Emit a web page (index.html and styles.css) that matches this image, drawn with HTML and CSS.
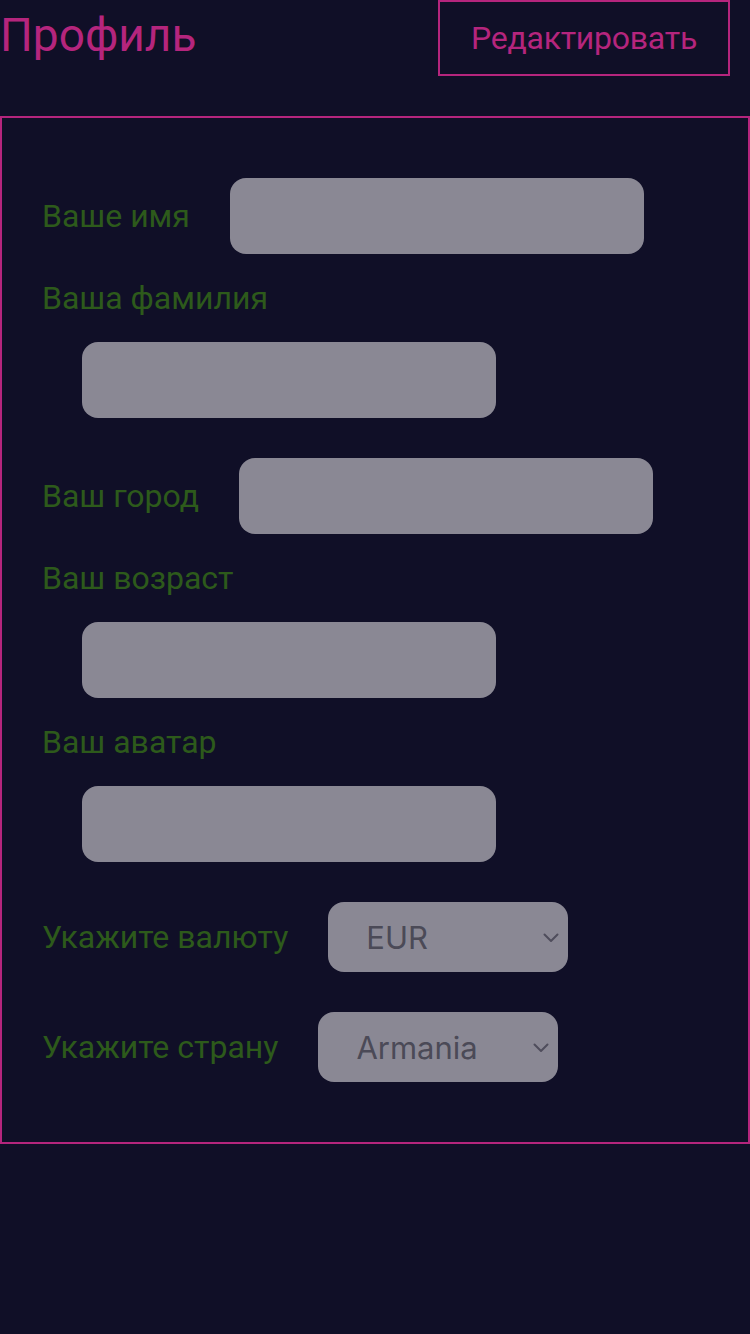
FILE: index.html
```html
<!DOCTYPE html>
<html lang="ru">
<head>
<meta charset="utf-8">
<title>Профиль</title>
<link rel="stylesheet" href="styles.css">
</head>
<body>
<header class="top">
  <h1 class="title">Профиль</h1>
  <button class="edit-btn" type="button">Редактировать</button>
</header>
<form class="profile">
  <div class="field">
    <label class="field-label">Ваше имя</label>
    <input class="field-input" type="text">
  </div>
  <div class="field field--stacked">
    <label class="field-label">Ваша фамилия</label>
    <input class="field-input" type="text">
  </div>
  <div class="field">
    <label class="field-label">Ваш город</label>
    <input class="field-input" type="text">
  </div>
  <div class="field field--stacked">
    <label class="field-label">Ваш возраст</label>
    <input class="field-input" type="text">
  </div>
  <div class="field field--stacked">
    <label class="field-label">Ваш аватар</label>
    <input class="field-input" type="text">
  </div>
  <div class="field">
    <label class="field-label">Укажите валюту</label>
    <span class="select-wrap">
      <select class="field-select">
        <option>EUR</option>
        <option>USD</option>
      </select>
      <svg class="chevron" width="16" height="10" viewBox="0 0 16 10"><path d="M1.5 1.5 L8 8 L14.5 1.5" fill="none" stroke="#4f4d5c" stroke-width="2" stroke-linecap="round" stroke-linejoin="round"/></svg>
    </span>
  </div>
  <div class="field">
    <label class="field-label">Укажите страну</label>
    <span class="select-wrap">
      <select class="field-select">
        <option>Armania</option>
        <option>Russia</option>
      </select>
      <svg class="chevron" width="16" height="10" viewBox="0 0 16 10"><path d="M1.5 1.5 L8 8 L14.5 1.5" fill="none" stroke="#4f4d5c" stroke-width="2" stroke-linecap="round" stroke-linejoin="round"/></svg>
    </span>
  </div>
</form>
</body>
</html>
```
FILE: styles.css
```css
* {
  box-sizing: border-box;
}

html,
body {
  margin: 0;
  padding: 0;
  background: #100f27;
  min-height: 1334px;
}

body {
  font-family: Roboto, "Liberation Sans", sans-serif;
  color: #b5257d;
}

.top {
  display: flex;
  justify-content: space-between;
  align-items: flex-start;
  padding-right: 20px;
  margin-bottom: 40px;
}

.title {
  margin: 0;
  font-size: 46px;
  font-weight: 400;
  line-height: 70px;
  height: 66px;
  color: #b5257d;
}

.edit-btn {
  font-family: Roboto, "Liberation Sans", sans-serif;
  font-size: 32px;
  line-height: 48px;
  letter-spacing: -0.25px;
  padding: 12px 31px;
  border: 2px solid #b5257d;
  background: transparent;
  color: #b5257d;
  border-radius: 0;
}

.profile {
  border: 2px solid #b5257d;
  padding: 40px;
}

.field {
  display: flex;
  align-items: center;
}

.field--stacked {
  flex-direction: column;
  align-items: flex-start;
}

.field-label {
  font-size: 32px;
  line-height: 48px;
  color: #2d5a1b;
}

.field-input {
  display: block;
  width: 414px;
  height: 76px;
  margin: 20px 40px;
  border: none;
  border-radius: 16px;
  background: #8a8894;
}

.select-wrap {
  position: relative;
  display: block;
  margin: 20px 0 20px 40px;
}

.field-select {
  display: block;
  width: 240px;
  height: 70px;
  padding: 0 0 0 38px;
  border: none;
  border-radius: 16px;
  background: #8a8894;
  color: #4b4a57;
  font-family: Inter, Roboto, sans-serif;
  font-size: 31px;
  appearance: none;
  -webkit-appearance: none;
}

.chevron {
  position: absolute;
  right: 9px;
  top: 31px;
  pointer-events: none;
}
```
